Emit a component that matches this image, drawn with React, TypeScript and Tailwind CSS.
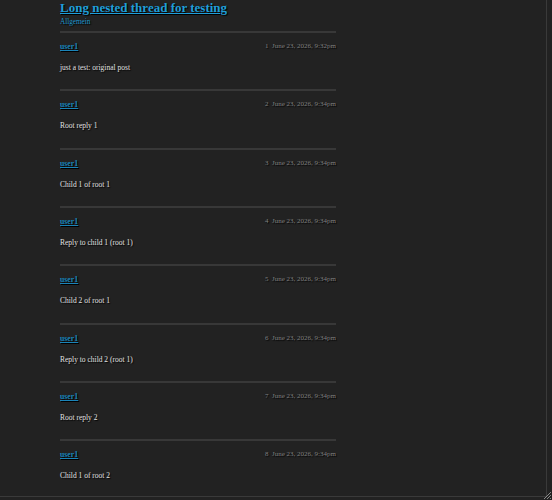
const posts = [
  { n: 1, time: 'June 23, 2026, 9:32pm', text: 'just a test: original post' },
  { n: 2, time: 'June 23, 2026, 9:34pm', text: 'Root reply 1' },
  { n: 3, time: 'June 23, 2026, 9:34pm', text: 'Child 1 of root 1' },
  { n: 4, time: 'June 23, 2026, 9:34pm', text: 'Reply to child 1 (root 1)' },
  { n: 5, time: 'June 23, 2026, 9:34pm', text: 'Child 2 of root 1' },
  { n: 6, time: 'June 23, 2026, 9:34pm', text: 'Reply to child 2 (root 1)' },
  { n: 7, time: 'June 23, 2026, 9:34pm', text: 'Root reply 2' },
  { n: 8, time: 'June 23, 2026, 9:34pm', text: 'Child 1 of root 2' },
];

export default function App() {
  return (
    <div className="relative h-[500px] w-[552px] overflow-hidden bg-[#222222] font-['Liberation_Serif',serif] [text-shadow:1px_1px_1px_#000]">
      <div className="h-[497px] w-[547px] overflow-hidden border-r border-b border-[#3a3a3a]">
        <div className="ml-[60px] w-[276px]">
          {/* Header */}
          <div className="h-[31px]">
            <a href="#" className="block text-[13px] leading-[16px] font-bold text-[#1f9ed9] underline">
              Long nested thread for testing
            </a>
            <a href="#" className="mt-[2px] block text-[7.2px] leading-[9px] text-[#1d95cc]">
              Allgemein
            </a>
          </div>

          {/* Posts */}
          {posts.map((p) => (
            <div key={p.n} className="h-[58.35px] border-t-2 border-[#383838]">
              <div className="mt-[9px] flex items-center justify-between leading-[9px]">
                <a href="#" className="text-[7.8px] font-bold text-[#1b84b8] underline">
                  user1
                </a>
                <span className="text-[7px] text-[#808080]">
                  {p.n}&nbsp;&nbsp;{p.time}
                </span>
              </div>
              <p className="mt-[12px] text-[7.5px] leading-[9px] text-[#e2e2e2]">{p.text}</p>
            </div>
          ))}
        </div>
      </div>
      <svg className="absolute right-[1px] bottom-[1px] h-[8px] w-[8px]" viewBox="0 0 8 8">
        <path d="M8 1L1 8M8 4L4 8M8 7L7 8" stroke="#8a8a8a" strokeWidth="1" />
      </svg>
    </div>
  );
}
